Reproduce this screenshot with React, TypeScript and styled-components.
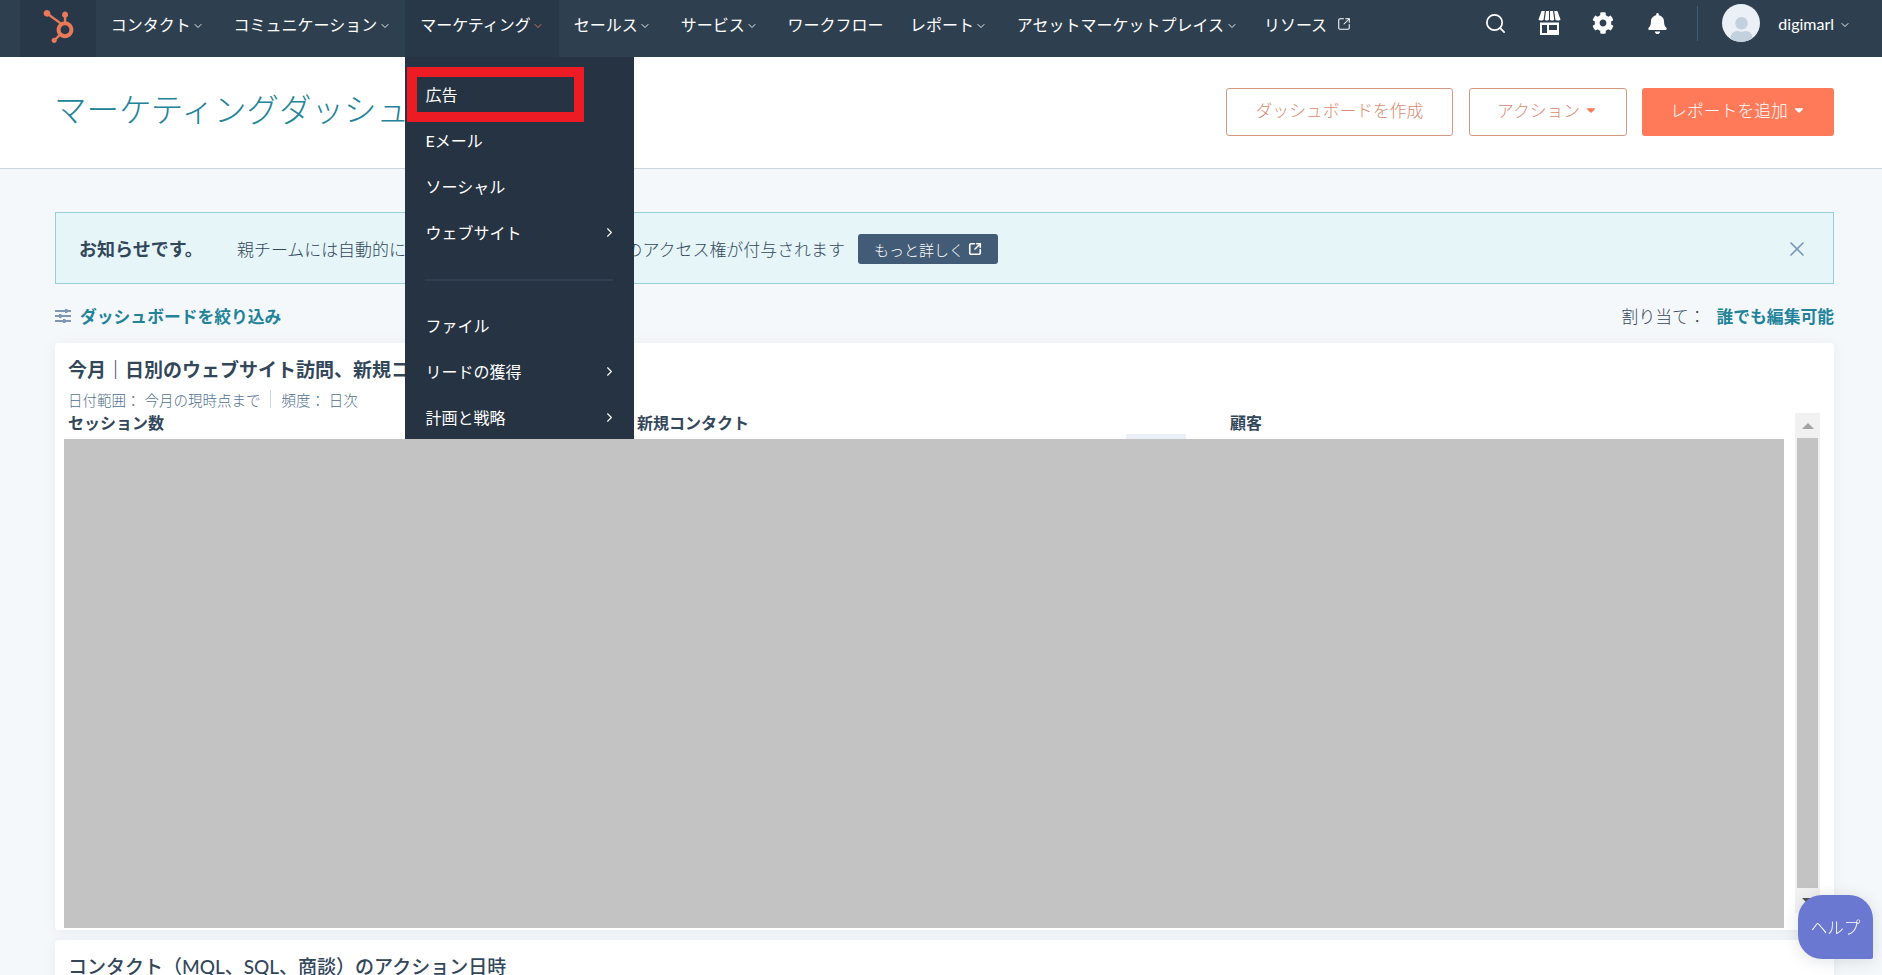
import React from "react";
import styled, { createGlobalStyle } from "styled-components";
import { ChevronDown, ChevronRight, Search, SquareArrowOutUpRight, X } from "lucide-react";
import { FaBell, FaCog, FaHubspot, FaCaretDown, FaUser } from "react-icons/fa";

const GlobalStyle = createGlobalStyle`
  html, body {
    margin: 0;
    height: 100%;
    overflow: hidden;
    background: #f5f8fa;
  }
  body {
    font-family: "Lato", "Noto Sans CJK JP", sans-serif;
    font-size: 16px;
    color: #33475b;
  }
  * { box-sizing: border-box; }
`;

const navItems = [
  { label: "コンタクト", chevron: true },
  { label: "コミュニケーション", chevron: true },
  { label: "マーケティング", chevron: true, active: true },
  { label: "セールス", chevron: true },
  { label: "サービス", chevron: true },
  { label: "ワークフロー", compact: true },
  { label: "レポート", chevron: true },
  { label: "アセットマーケットプレイス", chevron: true, compact: true },
];

const menuTop = [{ label: "広告" }, { label: "Eメール" }, { label: "ソーシャル" }, { label: "ウェブサイト", more: true }];
const menuBottom = [
  { label: "ファイル" },
  { label: "リードの獲得", more: true },
  { label: "計画と戦略", more: true },
];

function StoreIcon() {
  return (
    <svg width="23" height="24" viewBox="0 0 23 24" fill="#fff">
      <path d="M3.6 0h3.200L5.600 8.600c-.2 1.300-4.900 1.300-5.100 0zM8 0h3v8.600c0 1.300-4.300 1.300-4.200 0zM12 0h3l1.200 8.600c.1 1.300-4.200 1.300-4.200 0zM16.200 0h3.200l3.100 8.600c-.2 1.300-4.900 1.300-5.100 0z" />
      <path fillRule="evenodd" d="M2 11.500h19V24H2zM4 14v8h5v-8zM11 14v5h8v-5z" />
    </svg>
  );
}

function FilterIcon() {
  return (
    <svg width="16" height="14" viewBox="0 0 16 14" fill="#7c98b6">
      <rect y="1" width="16" height="2" />
      <rect y="6" width="16" height="2" />
      <rect y="11" width="16" height="2" />
      <rect x="10" width="2.500" height="4" />
      <rect x="4" y="5" width="2.500" height="4" />
      <rect x="8" y="10" width="2.500" height="4" />
    </svg>
  );
}

export default function App() {
  return (
    <>
      <GlobalStyle />
      <Nav>
        <LogoCell>
          <FaHubspot size={33} color="#e9795a" />
        </LogoCell>
        {navItems.map((item) => (
          <NavItem key={item.label} $active={item.active} $compact={item.compact}>
            <NavLabel>
              {item.label}
              {item.chevron && (
                <Chevron $active={item.active}>
                  <ChevronDown size={12} strokeWidth={1.8} />
                </Chevron>
              )}
            </NavLabel>
            {item.active && (
              <Menu>
                {menuTop.map((m) => (
                  <MenuRow key={m.label}>
                    {m.label}
                    {m.more && <ChevronRight size={15} strokeWidth={1.8} />}
                  </MenuRow>
                ))}
                <MenuDivider />
                {menuBottom.map((m) => (
                  <MenuRow key={m.label}>
                    {m.label}
                    {m.more && <ChevronRight size={15} strokeWidth={1.8} />}
                  </MenuRow>
                ))}
                <Highlight />
              </Menu>
            )}
          </NavItem>
        ))}
        <NavItem>
          <NavLabel>
            リソース
            <NavExternal>
              <SquareArrowOutUpRight size={14} strokeWidth={1.8} />
            </NavExternal>
          </NavLabel>
        </NavItem>

        <NavRight>
          <IconCell>
            <Search size={23} strokeWidth={1.8} />
          </IconCell>
          <IconCell>
            <StoreIcon />
          </IconCell>
          <IconCell>
            <FaCog size={22} />
          </IconCell>
          <IconCell>
            <FaBell size={21} />
          </IconCell>
          <NavDivider />
          <Avatar>
            <FaUser size={25} color="#c3d0de" />
          </Avatar>
          <UserName>digimarl</UserName>
          <UserChevron>
            <ChevronDown size={12} strokeWidth={1.8} />
          </UserChevron>
        </NavRight>
      </Nav>

      <PageHeader>
        <Title>マーケティングダッシュボード</Title>
        <Actions>
          <OutlineButton>ダッシュボードを作成</OutlineButton>
          <OutlineButton $narrow>
            アクション
            <FaCaretDown size={14} color="#ff7a59" />
          </OutlineButton>
          <PrimaryButton>
            レポートを追加
            <FaCaretDown size={14} color="#fff" />
          </PrimaryButton>
        </Actions>
      </PageHeader>

      <Content>
        <Alert>
          <AlertStrong>お知らせです。</AlertStrong>
          <AlertText>親チームには自動的に子チームのダッシュボードへのアクセス権が付与されます</AlertText>
          <AlertButton>
            もっと詳しく
            <SquareArrowOutUpRight size={14} strokeWidth={2.8} />
          </AlertButton>
          <AlertClose>
            <X size={24} strokeWidth={1.7} />
          </AlertClose>
        </Alert>

        <FilterRow>
          <FilterLink>
            <FilterIcon />
            <span>ダッシュボードを絞り込み</span>
          </FilterLink>
          <Assign>
            割り当て：<strong>誰でも編集可能</strong>
          </Assign>
        </FilterRow>

        <Card>
          <CardTitle>今月｜日別のウェブサイト訪問、新規コンタクト、顧客</CardTitle>
          <CardMeta>
            <span>日付範囲： 今月の現時点まで</span>
            <MetaSep />
            <span>頻度： 日次</span>
          </CardMeta>
          <CardBody>
            <ChartArea>
              <ColumnLabels>
                <span>セッション数</span>
                <span>新規コンタクト</span>
                <span>顧客</span>
                <LabelStub />
              </ColumnLabels>
              <Redacted />
            </ChartArea>
            <ScrollBar>
              <ScrollButton>
                <ScrollArrow />
              </ScrollButton>
              <ScrollThumb />
              <ScrollButton>
                <ScrollArrow $down />
              </ScrollButton>
            </ScrollBar>
          </CardBody>
        </Card>

        <SecondCard>
          <SecondTitle>コンタクト（MQL、SQL、商談）のアクション日時</SecondTitle>
        </SecondCard>
      </Content>

      <HelpButton>ヘルプ</HelpButton>
    </>
  );
}

const Nav = styled.nav`
  display: flex;
  height: 57px;
  padding-left: 20px;
  background: #2e3f50;
  color: #fff;
`;

const LogoCell = styled.div`
  width: 76px;
  display: flex;
  align-items: center;
  justify-content: center;
  padding-bottom: 4px;
  background: #283848;
`;

const NavItem = styled.div<{ $active?: boolean; $compact?: boolean }>`
  position: relative;
  padding: 0 ${(p) => (p.$compact ? "11.700px" : "14.700px")} 0 14.700px;
  background: ${(p) => (p.$active ? "#283848" : "transparent")};
`;

const NavLabel = styled.div`
  display: flex;
  align-items: center;
  height: 47px;
  font-size: 16px;
  font-weight: 400;
  white-space: nowrap;
`;

const Chevron = styled.span<{ $active?: boolean }>`
  display: flex;
  width: 13.500px;
  justify-content: flex-end;
  margin-top: 4px;
  color: ${(p) => (p.$active ? "#e9795a" : "#fff")};
`;

const NavExternal = styled.span`
  display: flex;
  margin-left: 10px;
`;

const Menu = styled.div`
  position: absolute;
  top: 100%;
  left: 0;
  z-index: 5;
  width: 229px;
  height: 382px;
  padding-top: 14px;
  overflow: hidden;
  background: #253342;
`;

const MenuRow = styled.div`
  display: flex;
  align-items: center;
  justify-content: space-between;
  height: 46px;
  padding: 0 17px 0 20px;
  font-size: 16px;
  font-weight: 400;
  color: #fff;
`;

const MenuDivider = styled.div`
  height: 2px;
  margin: 24px 21px 21px 20px;
  background: #2e3f50;
`;

const Highlight = styled.div`
  position: absolute;
  top: 10px;
  left: 2px;
  width: 177px;
  height: 55px;
  border: 10px solid #ed1c24;
`;

const NavRight = styled.div`
  display: flex;
  align-items: center;
  height: 46px;
  margin-left: auto;
  padding-right: 31px;
`;

const IconCell = styled.div`
  width: 54px;
  display: flex;
  justify-content: center;
  align-items: center;
`;

const NavDivider = styled.div`
  width: 1px;
  height: 35px;
  margin-left: 13px;
  background: #425b76;
`;

const Avatar = styled.div`
  width: 38px;
  height: 38px;
  margin-left: 24px;
  display: flex;
  align-items: flex-end;
  justify-content: center;
  overflow: hidden;
  border-radius: 50%;
  background: #eaf0f6;
`;

const UserName = styled.span`
  margin-left: 18px;
  font-size: 16px;
  font-weight: 400;
`;

const UserChevron = styled.span`
  display: flex;
  margin-left: 5px;
  margin-top: 4px;
`;

const PageHeader = styled.header`
  display: flex;
  align-items: center;
  justify-content: space-between;
  height: 112px;
  padding: 0 48px 2px 54px;
  background: #fff;
  border-bottom: 1px solid #cbd6e2;
`;

const Title = styled.h1`
  margin: 0 0 8px;
  font-size: 32.500px;
  font-weight: 300;
  color: #22839a;
`;

const Actions = styled.div`
  display: flex;
  gap: 15.500px;
`;

const OutlineButton = styled.button<{ $narrow?: boolean }>`
  display: flex;
  align-items: center;
  justify-content: center;
  gap: 4px;
  width: ${(p) => (p.$narrow ? "158px" : "227px")};
  height: 48px;
  padding: 0 0 3px;
  border: 1px solid #d8977f;
  border-radius: 3px;
  background: #fff;
  color: #d98b70;
  font: 300 16.800px "Lato", "Noto Sans CJK JP", sans-serif;
`;

const PrimaryButton = styled.button`
  display: flex;
  align-items: center;
  justify-content: center;
  gap: 4px;
  width: 192px;
  height: 48px;
  padding: 0 0 3px;
  border: 0;
  border-radius: 3px;
  background: #ff7a59;
  color: #fff;
  font: 300 16.800px "Lato", "Noto Sans CJK JP", sans-serif;
`;

const Content = styled.main`
  padding: 43px 48px 0 55px;
`;

const Alert = styled.div`
  display: flex;
  align-items: center;
  height: 72px;
  padding: 0 24px 0 23px;
  background: #e5f5f8;
  border: 1px solid #96d0d9;
`;

const AlertStrong = styled.strong`
  width: 158px;
  font-size: 18px;
  font-weight: 700;
`;

const AlertText = styled.span`
  font-size: 16.940px;
  font-weight: 300;
  color: #33475b;
`;

const AlertButton = styled.button`
  display: flex;
  align-items: center;
  gap: 4px;
  height: 30px;
  margin: 2px 0 0 13px;
  padding: 0 16px;
  border: 0;
  border-radius: 3px;
  background: #425b76;
  color: #fff;
  font: 300 15px "Lato", "Noto Sans CJK JP", sans-serif;
`;

const AlertClose = styled.span`
  display: flex;
  margin: 2px 0 0 auto;
  color: #7c98b6;
`;

const FilterRow = styled.div`
  display: flex;
  align-items: center;
  justify-content: space-between;
  height: 59px;
  padding-top: 5px;
`;

const FilterLink = styled.div`
  display: flex;
  align-items: center;
  gap: 9px;
  font-size: 16.800px;
  font-weight: 700;
  color: #22839a;
`;

const Assign = styled.div`
  font-size: 16.800px;
  font-weight: 300;
  color: #33475b;

  strong {
    margin-left: 11px;
    font-weight: 700;
    color: #22839a;
  }
`;

const Card = styled.section`
  height: 587px;
  padding: 14px 14px 0 9px;
  border-radius: 4px;
  background: #fff;
  box-shadow: 0 1px 12px rgba(124, 152, 182, 0.12);
`;

const CardTitle = styled.h2`
  margin: 0 0 0 4px;
  font-size: 19px;
  line-height: 26px;
  font-weight: 700;
  white-space: nowrap;
`;

const CardMeta = styled.div`
  display: flex;
  align-items: center;
  gap: 10px;
  height: 20px;
  margin: 6px 0 4px 4px;
  font-size: 14.500px;
  font-weight: 300;
  color: #516f90;
`;

const MetaSep = styled.span`
  width: 1px;
  height: 18px;
  background: #cbd6e2;
`;

const CardBody = styled.div`
  display: flex;
  gap: 11px;
  align-items: flex-start;
`;

const ChartArea = styled.div`
  flex: 1;
`;

const ColumnLabels = styled.div`
  position: relative;
  display: grid;
  grid-template-columns: 569px 593px 1fr;
  height: 26px;
  padding-left: 4px;
  font-size: 16px;
  line-height: 20px;
  font-weight: 700;
`;

const LabelStub = styled.div`
  position: absolute;
  left: 1062px;
  bottom: 0;
  width: 60px;
  height: 5px;
  background: #eaf0f6;
`;

const Redacted = styled.div`
  height: 489px;
  background: #c3c3c3;
`;

const ScrollBar = styled.div`
  display: flex;
  flex-direction: column;
  align-items: center;
  width: 25px;
  background: #f1f1f1;
`;

const ScrollButton = styled.div`
  display: flex;
  align-items: center;
  justify-content: center;
  width: 100%;
  height: 25px;
`;

const ScrollArrow = styled.span<{ $down?: boolean }>`
  width: 0;
  height: 0;
  border-left: 6px solid transparent;
  border-right: 6px solid transparent;
  ${(p) => (p.$down ? "border-top: 6px solid #505050;" : "border-bottom: 6px solid #a3a3a3;")}
`;

const ScrollThumb = styled.div`
  width: 21px;
  height: 450px;
  background: #c3c3c3;
`;

const SecondCard = styled.section`
  height: 60px;
  margin-top: 10px;
  padding: 14px 13px 0;
  border-radius: 4px;
  background: #fff;
  box-shadow: 0 1px 12px rgba(124, 152, 182, 0.12);
`;

const SecondTitle = styled.h2`
  margin: 0;
  font-size: 19px;
  line-height: 26px;
  font-weight: 500;
  white-space: nowrap;
`;

const HelpButton = styled.button`
  position: fixed;
  left: 1798px;
  top: 895px;
  width: 75px;
  height: 64px;
  padding: 0;
  border: 0;
  border-radius: 24px 24px 2px 24px;
  background: #6a78d1;
  box-shadow: 0 2px 16px rgba(45, 62, 80, 0.15);
  color: #fff;
  font: 300 16.500px "Lato", "Noto Sans CJK JP", sans-serif;
`;
